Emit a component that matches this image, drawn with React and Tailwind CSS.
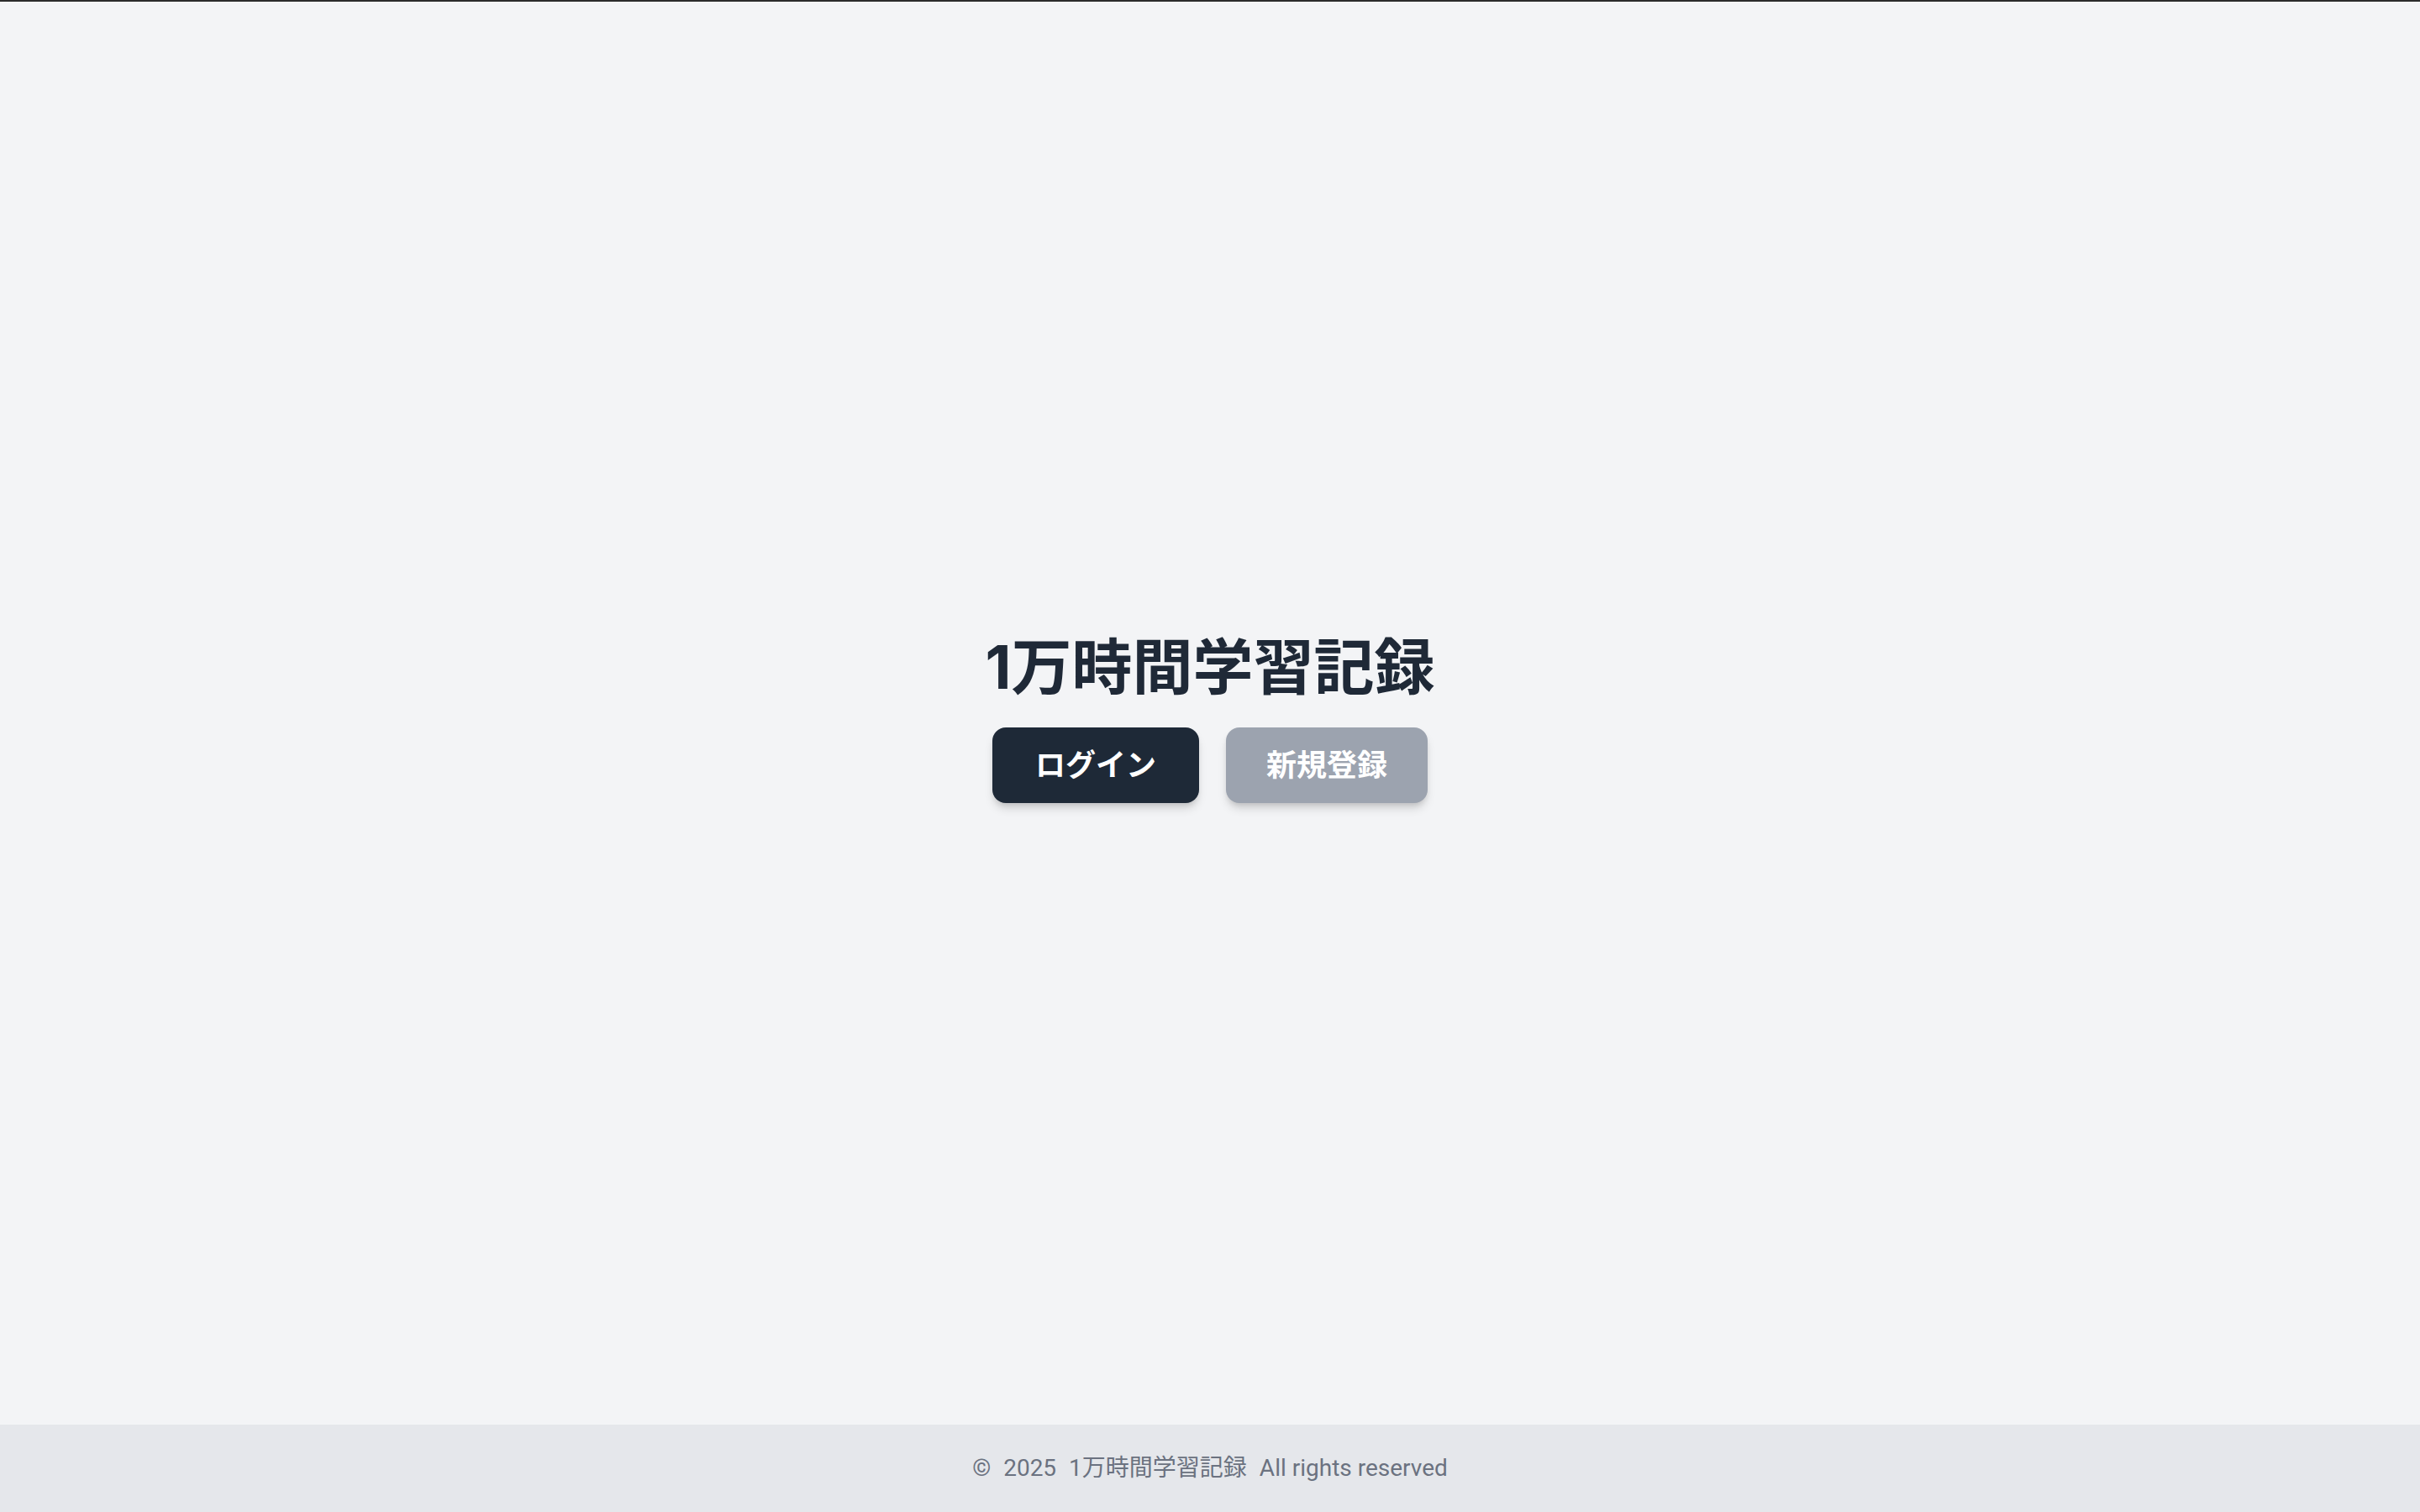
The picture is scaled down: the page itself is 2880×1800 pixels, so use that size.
export default function App() {
  const font = { fontFamily: 'Inter, "Noto Sans CJK JP", "Noto Sans", sans-serif' };
  const footFont = { fontFamily: 'Roboto, "Noto Sans CJK JP", "Noto Sans", sans-serif' };
  return (
    <div className="min-h-screen flex flex-col bg-[#f3f4f6]" style={font}>
      <div className="h-[2px] bg-[#2b2b2b]" />
      <main className="flex-1 flex flex-col items-center justify-center pt-[12px]">
        <h1 className="text-[72px] leading-[80px] font-bold text-[#1f2937] mb-[32px]">1万時間学習記録</h1>
        <div className="flex gap-[32px]">
          <button className="w-[246px] py-[17px] rounded-[16px] bg-[#1e2937] text-white text-[36px] leading-[56px] font-bold shadow-[0_8px_12px_-2px_rgba(0,0,0,0.15),0_4px_6px_-2px_rgba(0,0,0,0.1)]">
            ログイン
          </button>
          <button className="w-[240px] py-[17px] rounded-[16px] bg-[#9ca3af] text-white text-[36px] leading-[56px] font-bold shadow-[0_8px_12px_-2px_rgba(0,0,0,0.15),0_4px_6px_-2px_rgba(0,0,0,0.1)]">
            新規登録
          </button>
        </div>
      </main>
      <footer className="bg-[#e5e7eb] h-[104px] flex items-center justify-center" style={footFont}>
        <p className="text-[28px] leading-[40px] text-[#6b7280] flex gap-[15px]">
          <span>©</span>
          <span>2025</span>
          <span>1万時間学習記録</span>
          <span>All rights reserved</span>
        </p>
      </footer>
    </div>
  );
}
